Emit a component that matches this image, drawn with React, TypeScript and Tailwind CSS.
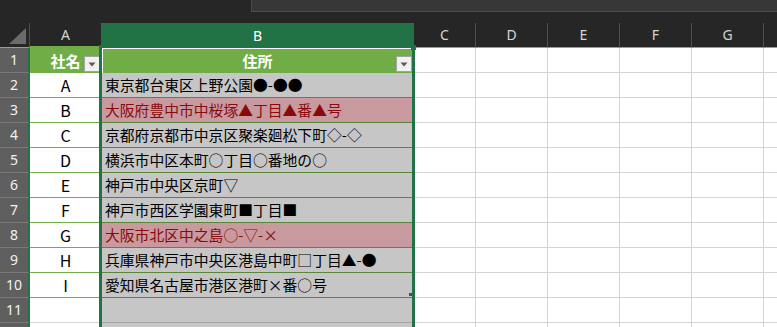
import React from "react";

type Row = { a: string; b: string; red?: boolean };

const rows: Row[] = [
  { a: "A", b: "東京都台東区上野公園●-●●" },
  { a: "B", b: "大阪府豊中市中桜塚▲丁目▲番▲号", red: true },
  { a: "C", b: "京都府京都市中京区聚楽廻松下町◇-◇" },
  { a: "D", b: "横浜市中区本町○丁目○番地の○" },
  { a: "E", b: "神戸市中央区京町▽" },
  { a: "F", b: "神戸市西区学園東町■丁目■" },
  { a: "G", b: "大阪市北区中之島○-▽-×", red: true },
  { a: "H", b: "兵庫県神戸市中央区港島中町□丁目▲-●" },
  { a: "I", b: "愛知県名古屋市港区港町×番○号" },
];

const Dropdown = ({ cls }: { cls: string }) => (
  <div
    className={`absolute bottom-[1px] w-[16px] h-[16px] bg-[#f1f1f1] border border-[#a3a3a3] flex items-center justify-center ${cls}`}
  >
    <svg width="8" height="5" viewBox="0 0 8 5">
      <path d="M0.5 0.5 L7.5 0.5 L4 4.5 Z" fill="#5a5a5a" />
    </svg>
  </div>
);

const EmptyCells = () => (
  <>
    <div className="w-[62px] shrink-0 h-full bg-white border-r border-b border-[#d4d4d4]" />
    <div className="w-[72px] shrink-0 h-full bg-white border-r border-b border-[#d4d4d4]" />
    <div className="w-[72px] shrink-0 h-full bg-white border-r border-b border-[#d4d4d4]" />
    <div className="w-[72px] shrink-0 h-full bg-white border-r border-b border-[#d4d4d4]" />
    <div className="w-[72px] shrink-0 h-full bg-white border-r border-b border-[#d4d4d4]" />
    <div className="flex-1 h-full bg-white border-b border-[#d4d4d4]" />
  </>
);

const RowHead = ({ n }: { n?: number }) => (
  <div className="w-[30px] shrink-0 h-full bg-[#5f5f5f] border-r-2 border-r-[#217346] border-b border-b-[#787878] flex items-center justify-center text-[14px] text-[#f2f2f2] font-['Noto_Sans',sans-serif]">
    {n}
  </div>
);

const ColHead = ({ label, w, last }: { label: string; w: string; last?: boolean }) => (
  <div
    className={`${w} h-full flex items-center justify-center text-[14px] text-[#d4d4d4] border-b border-b-[#9a9a9a] ${
      last ? "" : "border-r border-r-[#4e4e4e]"
    }`}
  >
    {label}
  </div>
);

export default function App() {
  return (
    <div className="relative w-[777px] h-[327px] overflow-hidden bg-[#262626] font-['Noto_Sans_CJK_JP','Noto_Sans',sans-serif] leading-none select-none">
      {/* top bar */}
      <div className="h-[23px] flex">
        <div className="w-[251px] shrink-0" />
        <div className="flex-1 h-[12px] bg-[#373737] border-l border-b border-[#4a4a4a]" />
      </div>

      {/* column header row */}
      <div className="h-[25px] flex font-['Noto_Sans',sans-serif]">
        <div className="w-[30px] shrink-0 h-full border-r border-r-[#4e4e4e] border-b border-b-[#9a9a9a] flex items-end justify-end pb-[3px] pr-[3px]">
          <svg width="17" height="16" viewBox="0 0 17 16">
            <path d="M17 0 L17 16 L0 16 Z" fill="#6b6b6b" />
          </svg>
        </div>
        <div className="w-[71px] shrink-0 h-full flex items-center justify-center text-[14px] text-[#d4d4d4] border-b-2 border-b-[#70ad47]">
          A
        </div>
        <div className="w-[313px] shrink-0 h-full flex items-center justify-center text-[14px] text-white bg-[#217346]">
          B
        </div>
        <ColHead label="C" w="w-[62px] shrink-0" />
        <ColHead label="D" w="w-[72px] shrink-0" />
        <ColHead label="E" w="w-[72px] shrink-0" />
        <ColHead label="F" w="w-[72px] shrink-0" />
        <ColHead label="G" w="w-[72px] shrink-0" />
        <ColHead label="" w="flex-1" last />
      </div>

      {/* row 1: table header */}
      <div className="h-[25px] flex">
        <RowHead n={1} />
        <div className="relative w-[71px] shrink-0 h-full bg-[#70ad47] flex items-center justify-center text-[15px] font-bold text-white">
          社名
          <Dropdown cls="right-[1px]" />
        </div>
        <div className="relative w-[313px] shrink-0 h-full bg-[#70ad47] shadow-[inset_2px_1px_0_0_#ffffff] flex items-center justify-center text-[15px] font-bold text-white">
          住所
          <Dropdown cls="right-[2px]" />
        </div>
        <EmptyCells />
      </div>

      {rows.map((r, i) => (
        <div key={i} className="h-[25px] flex">
          <RowHead n={i + 2} />
          <div className="w-[71px] shrink-0 h-full bg-white border-b border-b-[#70ad47] flex items-center justify-center text-[16px] text-black">
            {r.a}
          </div>
          <div
            className={`w-[313px] shrink-0 h-full border-b border-b-[#578737] flex items-center pl-[4px] text-[14.8px] whitespace-nowrap ${
              r.red ? "bg-[#c89a9f] text-[#8a0a0c]" : "bg-[#c6c6c6] text-black"
            }`}
          >
            {r.b}
          </div>
          <EmptyCells />
        </div>
      ))}

      {/* row 11 */}
      <div className="h-[25px] flex">
        <RowHead n={11} />
        <div className="w-[71px] shrink-0 h-full bg-white border-b border-b-[#d4d4d4]" />
        <div className="w-[313px] shrink-0 h-full bg-[#c6c6c6] border-b border-b-[#a5a5a5]" />
        <EmptyCells />
      </div>

      {/* row 12 (partial, number hidden below the edge) */}
      <div className="h-[25px] flex">
        <RowHead />
        <div className="w-[71px] shrink-0 h-full bg-white border-b border-b-[#d4d4d4]" />
        <div className="w-[313px] shrink-0 h-full bg-[#c6c6c6] border-b border-b-[#a5a5a5]" />
        <EmptyCells />
      </div>

      {/* selection outline over column B */}
      <div className="pointer-events-none absolute left-[99px] top-[45px] w-[316px] h-[290px] border-[3px] border-b-0 border-[#217346]" />
      <div className="pointer-events-none absolute left-[411px] top-[45px] w-[5px] h-[5px] bg-[#217346]" />
      {/* table resize handle */}
      <div className="pointer-events-none absolute left-[409px] top-[293px] w-[3px] h-[3px] bg-[#3c4a8c]" />
    </div>
  );
}
